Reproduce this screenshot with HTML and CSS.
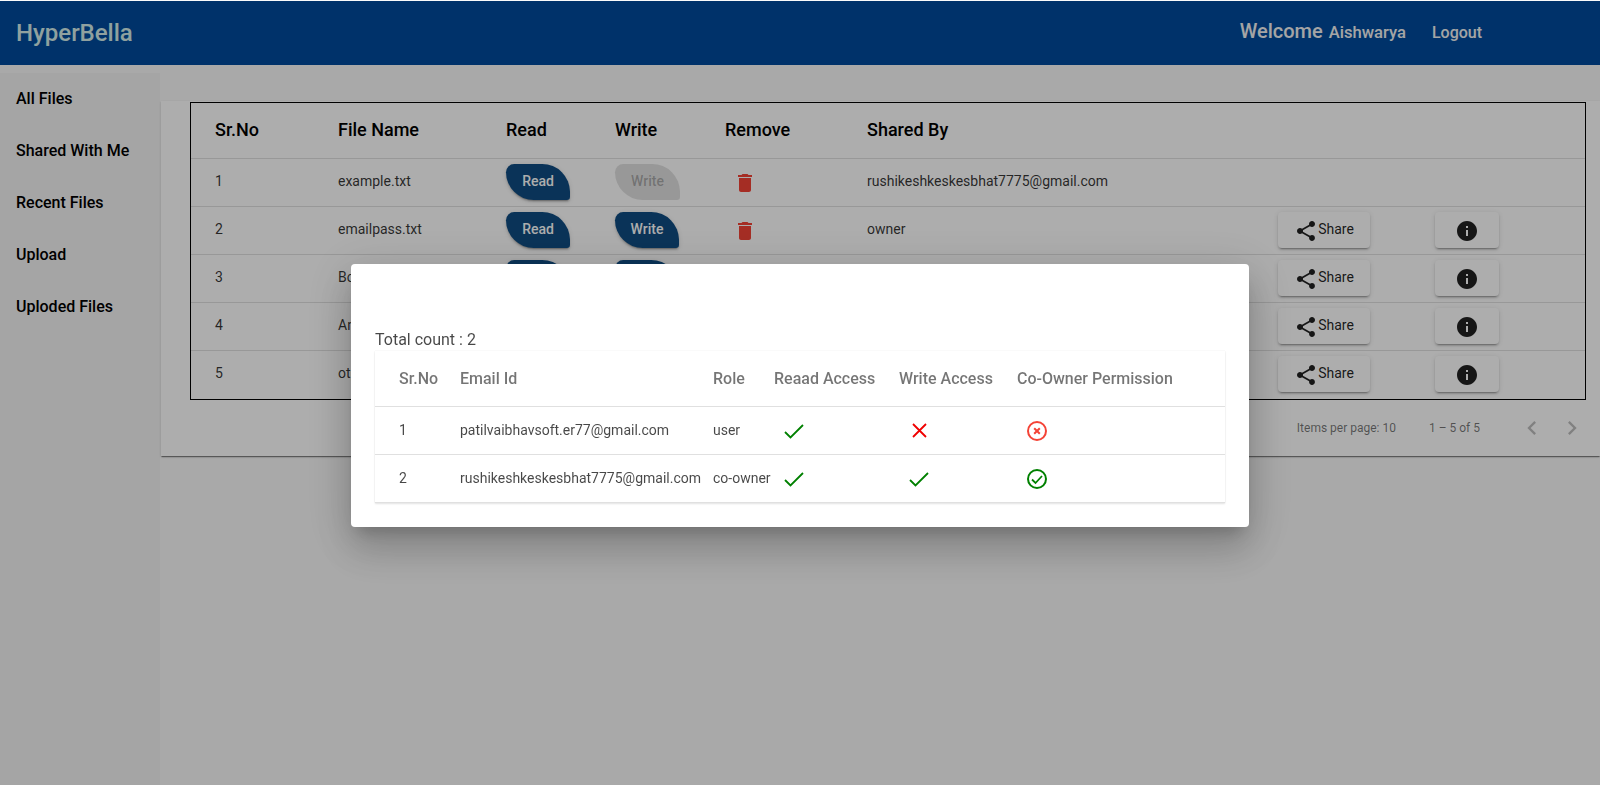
FILE: index.html
```html
<!DOCTYPE html>
<html>
<head>
    <title>HyperBella</title>
    <meta name="viewport" content="width=device-width, initial-scale=1.0">
    <link rel="stylesheet" href="styles.css">
</head>
<body>
    <svg class="icon-defs" width="0" height="0">
        <symbol id="i-delete" viewBox="0 0 24 24"><path d="M6 19c0 1.1.9 2 2 2h8c1.1 0 2-.9 2-2V7H6v12zM19 4h-3.5l-1-1h-5l-1 1H5v2h14V4z"/></symbol>
        <symbol id="i-share" viewBox="0 0 24 24"><path d="M18 16.08c-.76 0-1.44.3-1.96.77L8.91 12.7c.05-.23.09-.46.09-.7s-.04-.47-.09-.7l7.05-4.11c.54.5 1.25.81 2.04.81 1.66 0 3-1.34 3-3s-1.34-3-3-3-3 1.34-3 3c0 .24.04.47.09.7L8.04 9.81C7.5 9.31 6.79 9 6 9c-1.66 0-3 1.34-3 3s1.34 3 3 3c.79 0 1.5-.31 2.04-.81l7.12 4.16c-.05.21-.08.43-.08.65 0 1.61 1.31 2.92 2.92 2.92s2.92-1.31 2.92-2.92-1.31-2.92-2.92-2.92z"/></symbol>
        <symbol id="i-info" viewBox="0 0 24 24"><path d="M12 2C6.48 2 2 6.48 2 12s4.48 10 10 10 10-4.48 10-10S17.52 2 12 2zm1 15h-2v-6h2v6zm0-8h-2V7h2v2z"/></symbol>
        <symbol id="i-check" viewBox="0 0 24 24"><path d="M3 13l5.5 5.5L21 6" fill="none" stroke="#008000" stroke-width="1.8"/></symbol>
        <symbol id="i-cross" viewBox="0 0 24 24"><path d="M6 5l13 13M19 5L6 18" fill="none" stroke="#f00000" stroke-width="1.8"/></symbol>
        <symbol id="i-check-circle" viewBox="0 0 24 24"><circle cx="12" cy="12" r="9" fill="none" stroke="#008000" stroke-width="2"/><path d="M7 12.5l3.5 3.5 6.5-7" fill="none" stroke="#008000" stroke-width="1.8"/></symbol>
        <symbol id="i-cross-circle" viewBox="0 0 24 24"><circle cx="12" cy="12" r="9" fill="none" stroke="#f44336" stroke-width="2"/><path d="M9.2 9.2l5.6 5.6M14.8 9.2l-5.6 5.6" fill="none" stroke="#f44336" stroke-width="2"/></symbol>
    </svg>

    <div id="app">
        <header class="toolbar">
            <span class="brand">HyperBella</span>
            <div class="toolbar-right">
                <span class="welcome">Welcome</span>
                <span class="username">Aishwarya</span>
                <a class="logout">Logout</a>
            </div>
        </header>

        <div class="main-content">
            <nav class="sidenav">
                <a>All Files</a>
                <a>Shared With Me</a>
                <a>Recent Files</a>
                <a>Upload</a>
                <a>Uploded Files</a>
            </nav>

            <main class="content">
                <section class="file-card">
                    <div class="table-wrap">
                        <table class="file-table">
                            <colgroup>
                                <col class="c-no"><col class="c-name"><col class="c-read"><col class="c-write"><col class="c-remove"><col class="c-by"><col class="c-share"><col>
                            </colgroup>
                            <thead>
                                <tr><th>Sr.No</th><th>File Name</th><th>Read</th><th>Write</th><th>Remove</th><th>Shared By</th><th></th><th></th></tr>
                            </thead>
                            <tbody>
                                <tr>
                                    <td>1</td><td>example.txt</td>
                                    <td><button class="leaf-btn">Read</button></td>
                                    <td><button class="leaf-btn disabled">Write</button></td>
                                    <td><span class="trash"><svg><use href="#i-delete"/></svg></span></td>
                                    <td>rushikeshkeskesbhat7775@gmail.com</td>
                                    <td></td><td></td>
                                </tr>
                                <tr>
                                    <td>2</td><td>emailpass.txt</td>
                                    <td><button class="leaf-btn">Read</button></td>
                                    <td><button class="leaf-btn">Write</button></td>
                                    <td><span class="trash"><svg><use href="#i-delete"/></svg></span></td>
                                    <td>owner</td>
                                    <td><button class="raised-btn share-btn"><svg><use href="#i-share"/></svg>Share</button></td>
                                    <td><button class="raised-btn info-btn"><svg><use href="#i-info"/></svg></button></td>
                                </tr>
                                <tr>
                                    <td>3</td><td>Book.txt</td>
                                    <td><button class="leaf-btn">Read</button></td>
                                    <td><button class="leaf-btn">Write</button></td>
                                    <td><span class="trash"><svg><use href="#i-delete"/></svg></span></td>
                                    <td>owner</td>
                                    <td><button class="raised-btn share-btn"><svg><use href="#i-share"/></svg>Share</button></td>
                                    <td><button class="raised-btn info-btn"><svg><use href="#i-info"/></svg></button></td>
                                </tr>
                                <tr>
                                    <td>4</td><td>Angular.txt</td>
                                    <td><button class="leaf-btn">Read</button></td>
                                    <td><button class="leaf-btn">Write</button></td>
                                    <td><span class="trash"><svg><use href="#i-delete"/></svg></span></td>
                                    <td>owner</td>
                                    <td><button class="raised-btn share-btn"><svg><use href="#i-share"/></svg>Share</button></td>
                                    <td><button class="raised-btn info-btn"><svg><use href="#i-info"/></svg></button></td>
                                </tr>
                                <tr>
                                    <td>5</td><td>otp.txt</td>
                                    <td><button class="leaf-btn">Read</button></td>
                                    <td><button class="leaf-btn">Write</button></td>
                                    <td><span class="trash"><svg><use href="#i-delete"/></svg></span></td>
                                    <td>owner</td>
                                    <td><button class="raised-btn share-btn"><svg><use href="#i-share"/></svg>Share</button></td>
                                    <td><button class="raised-btn info-btn"><svg><use href="#i-info"/></svg></button></td>
                                </tr>
                            </tbody>
                        </table>
                    </div>

                    <div class="paginator">
                        <span>Items per page: 10</span>
                        <span class="range">1 – 5 of 5</span>
                        <span class="page-btn"><svg viewBox="0 0 24 24"><path d="M15.41 7.41L14 6l-6 6 6 6 1.41-1.41L10.83 12z"/></svg></span>
                        <span class="page-btn"><svg viewBox="0 0 24 24"><path d="M8.59 16.59L10 18l6-6-6-6-1.41 1.41L13.17 12z"/></svg></span>
                    </div>
                </section>
            </main>
        </div>
    </div>

    <!-- access dialog -->
    <div class="backdrop">
        <div class="dialog">
            <div class="dialog-title"></div>
            <div class="total-count">Total count : 2</div>
            <table class="access-table">
                <colgroup>
                    <col class="a-no"><col class="a-email"><col class="a-role"><col class="a-read"><col class="a-write"><col>
                </colgroup>
                <thead>
                    <tr><th>Sr.No</th><th>Email Id</th><th>Role</th><th>Reaad Access</th><th>Write Access</th><th>Co-Owner Permission</th></tr>
                </thead>
                <tbody>
                    <tr>
                        <td>1</td><td>patilvaibhavsoft.er77@gmail.com</td><td>user</td>
                        <td><svg class="status"><use href="#i-check"/></svg></td>
                        <td><svg class="status"><use href="#i-cross"/></svg></td>
                        <td><svg class="status"><use href="#i-cross-circle"/></svg></td>
                    </tr>
                    <tr>
                        <td>2</td><td>rushikeshkeskesbhat7775@gmail.com</td><td>co-owner</td>
                        <td><svg class="status"><use href="#i-check"/></svg></td>
                        <td><svg class="status"><use href="#i-check"/></svg></td>
                        <td><svg class="status"><use href="#i-check-circle"/></svg></td>
                    </tr>
                </tbody>
            </table>
        </div>
    </div>
</body>
</html>
```

FILE: styles.css
```css
* {
    box-sizing: border-box;
    margin: 0;
    padding: 0;
}

html, body {
    height: 100%;
}

body {
    font-family: Roboto, "Liberation Sans", sans-serif;
    font-size: 14px;
    color: rgba(0, 0, 0, 0.8);
    background: #fafafa;
    overflow: hidden;
}

.icon-defs {
    position: absolute;
}

#app {
    display: flex;
    flex-direction: column;
    height: 100%;
    padding-top: 1px;
}

.toolbar {
    display: flex;
    align-items: center;
    justify-content: space-between;
    height: 64px;
    padding: 0 118px 0 16px;
    background: #004b9d;
    color: #f3f3f3;
    font-weight: 500;
}

.brand {
    font-size: 24px;
    color: #d4eeea;
}

.toolbar-right {
    display: flex;
    align-items: baseline;
    padding-bottom: 4px;
    font-size: 16px;
}

.welcome {
    font-size: 20px;
    margin-right: 6px;
}

.username {
    font-size: 16.6px;
}

.logout {
    margin-left: 26px;
}

.main-content {
    display: flex;
    flex: 1;
    min-height: 0;
}

.sidenav {
    display: flex;
    flex-direction: column;
    width: 160px;
    margin-top: 8px;
    background: #f4f4f4;
    font-size: 16px;
    font-weight: 470;
    color: #000;
}

.sidenav a {
    height: 52px;
    line-height: 52px;
    padding-left: 16px;
}

.content {
    flex: 1;
    min-width: 0;
    padding: 36px 0 0 1px;
}

.file-card {
    background: #fff;
    box-shadow: 0 2px 1px -1px rgba(0, 0, 0, 0.3), 0 1px 1px 0 rgba(0, 0, 0, 0.2), 0 1px 3px 0 rgba(0, 0, 0, 0.12);
}

.table-wrap {
    padding: 1px 14px 0 29px;
}

.file-table {
    width: 100%;
    table-layout: fixed;
    border-collapse: separate;
    border-spacing: 0;
    border: 1px solid #000;
}

.c-no { width: 147px; }
.c-name { width: 168px; }
.c-read { width: 109px; }
.c-write { width: 110px; }
.c-remove { width: 142px; }
.c-by { width: 411px; }
.c-share { width: 157px; }

.file-table th {
    height: 56px;
    padding-bottom: 2px;
    text-align: left;
    font-size: 18px;
    font-weight: 470;
    color: #000;
    border-bottom: 1px solid rgba(0, 0, 0, 0.12);
}

.file-table td {
    height: 48px;
    padding-bottom: 3px;
    border-bottom: 1px solid rgba(0, 0, 0, 0.12);
}

.file-table tbody tr:last-child td {
    padding-bottom: 4px;
    border-bottom: none;
}

.file-table th:first-child,
.file-table td:first-child {
    padding-left: 24px;
}

.file-table button {
    display: flex;
    align-items: center;
    justify-content: center;
    height: 36px;
    margin-top: 2px;
    padding-bottom: 2px;
    border: none;
    font-family: inherit;
    font-size: 14px;
    font-weight: 500;
    cursor: pointer;
}

.leaf-btn {
    width: 64px;
    background: #0f4c82;
    color: #fff;
    border-radius: 10px 34px 4px 34px;
    box-shadow: 0 3px 1px -2px rgba(0, 0, 0, 0.2), 0 2px 2px 0 rgba(0, 0, 0, 0.14), 0 1px 5px 0 rgba(0, 0, 0, 0.12);
}

.file-table .leaf-btn.disabled {
    width: 65px;
    background: rgba(0, 0, 0, 0.12);
    color: rgba(0, 0, 0, 0.26);
    box-shadow: none;
}

.trash {
    display: flex;
    justify-content: center;
    width: 40px;
    margin-top: 4px;
    color: #f44336;
}

.trash svg {
    width: 24px;
    height: 24px;
    fill: currentColor;
}

.raised-btn svg {
    width: 24px;
    height: 24px;
    margin-top: 4px;
    fill: currentColor;
}

.raised-btn {
    background: #fff;
    color: rgba(0, 0, 0, 0.87);
    border-radius: 4px;
    box-shadow: 0 3px 1px -2px rgba(0, 0, 0, 0.2), 0 2px 2px 0 rgba(0, 0, 0, 0.14), 0 1px 5px 0 rgba(0, 0, 0, 0.12);
}

.file-table .share-btn {
    width: 92px;
    font-weight: 400;
}

.info-btn {
    width: 64px;
}

.paginator {
    display: flex;
    align-items: center;
    justify-content: flex-end;
    height: 56px;
    padding-right: 8px;
    font-size: 12px;
    color: rgba(0, 0, 0, 0.54);
}

.range {
    margin: 0 32px 0 33px;
}

.page-btn {
    display: flex;
    align-items: center;
    justify-content: center;
    width: 40px;
    height: 40px;
}

.page-btn svg {
    width: 28px;
    height: 28px;
    fill: rgba(0, 0, 0, 0.26);
}

/* dialog sits over the page */
.backdrop {
    position: fixed;
    top: 1px;
    left: 0;
    right: 0;
    bottom: 0;
    display: flex;
    align-items: flex-start;
    justify-content: center;
    padding-top: 263px;
    background: rgba(0, 0, 0, 0.32);
}

.dialog {
    width: 898px;
    padding: 24px;
    background: #fff;
    border-radius: 4px;
    box-shadow: 0 11px 15px -7px rgba(0, 0, 0, 0.2), 0 24px 38px 3px rgba(0, 0, 0, 0.14), 0 9px 46px 8px rgba(0, 0, 0, 0.12);
}

.dialog-title {
    height: 40px;
}

.total-count {
    font-size: 16px;
    line-height: 23px;
    color: rgba(0, 0, 0, 0.72);
}

.access-table {
    width: 100%;
    table-layout: fixed;
    border-collapse: separate;
    border-spacing: 0;
    color: rgba(0, 0, 0, 0.72);
    box-shadow: 0 1px 2px 0 rgba(0, 0, 0, 0.1), 0 0 1px 0 rgba(0, 0, 0, 0.1);
}

.a-no { width: 85px; }
.a-email { width: 253px; }
.a-role { width: 61px; }
.a-read { width: 125px; }
.a-write { width: 118px; }

.access-table th {
    height: 56px;
    text-align: left;
    font-size: 16px;
    font-weight: 500;
    color: rgba(0, 0, 0, 0.54);
    border-bottom: 1px solid rgba(0, 0, 0, 0.12);
}

.access-table td {
    height: 48px;
    padding-bottom: 2px;
    border-bottom: 1px solid rgba(0, 0, 0, 0.12);
}

.access-table th:first-child,
.access-table td:first-child {
    padding-left: 24px;
}

.status {
    display: block;
    width: 24px;
    height: 24px;
    margin: 3px 0 0 8px;
}
```
